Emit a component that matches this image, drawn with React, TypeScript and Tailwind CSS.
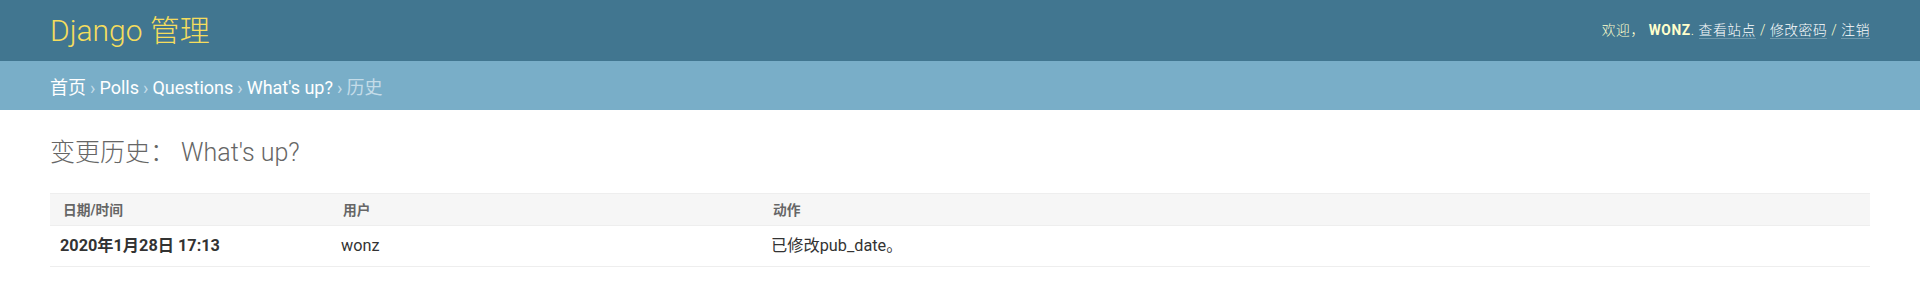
const font = "font-['Roboto','Noto_Sans_CJK_SC',sans-serif]";

const rows = [{ date: "2020年1月28日 17:13", user: "wonz", action: "已修改pub_date。" }];

const App = () => {
  return (
    <div className={`w-[1920px] min-h-[306px] bg-white ${font}`}>
      {/* header */}
      <div className="flex h-[61px] items-center justify-between bg-[#417690] px-[50px]">
        <h1 className="text-[30px] font-light leading-[36px] text-[#f5dd5d]">Django 管理</h1>
        <div className="text-[13.75px] font-light tracking-[0.6px] text-[#ffc]">
          欢迎，&nbsp;<strong className="font-bold">WONZ</strong>.{" "}
          <a className="border-b border-white/25 text-white">查看站点</a> /{" "}
          <a className="border-b border-white/25 text-white">修改密码</a> /{" "}
          <a className="border-b border-white/25 text-white">注销</a>
        </div>
      </div>

      {/* breadcrumbs */}
      <div className="flex h-[49px] items-center gap-[4px] bg-[#79aec8] px-[50px] pt-[3px] text-[18px] text-[#c4dce8]">
        <a className="text-white">首页</a>
        <span>›</span>
        <a className="text-white">Polls</a>
        <span>›</span>
        <a className="text-white">Questions</a>
        <span>›</span>
        <a className="text-white">What's up?</a>
        <span>›</span>
        <span>历史</span>
      </div>

      {/* content */}
      <div className="px-[50px] pt-[28px]">
        <h1 className="mb-[25px] text-[25px] font-light leading-[30px] text-[#666]">变更历史：&nbsp;What's up?</h1>
        <div className="grid h-[33px] grid-cols-[281px_430px_1fr] items-center border-y border-[#eee] bg-[#f6f6f6] text-[13.75px] font-bold leading-[18px] text-[#666]">
          <div className="pl-[13px]">日期/时间</div>
          <div className="pl-[12px]">用户</div>
          <div className="pl-[12px]">动作</div>
        </div>
        {rows.map((r) => (
          <div key={r.date} className="grid h-[41px] grid-cols-[281px_430px_1fr] items-center border-b border-[#eee] text-[16.25px] text-[#333]">
            <div className="pl-[10px] font-bold">{r.date}</div>
            <div className="pl-[10px]">{r.user}</div>
            <div className="pl-[10px]">{r.action}</div>
          </div>
        ))}
      </div>
    </div>
  );
};

export default App;
